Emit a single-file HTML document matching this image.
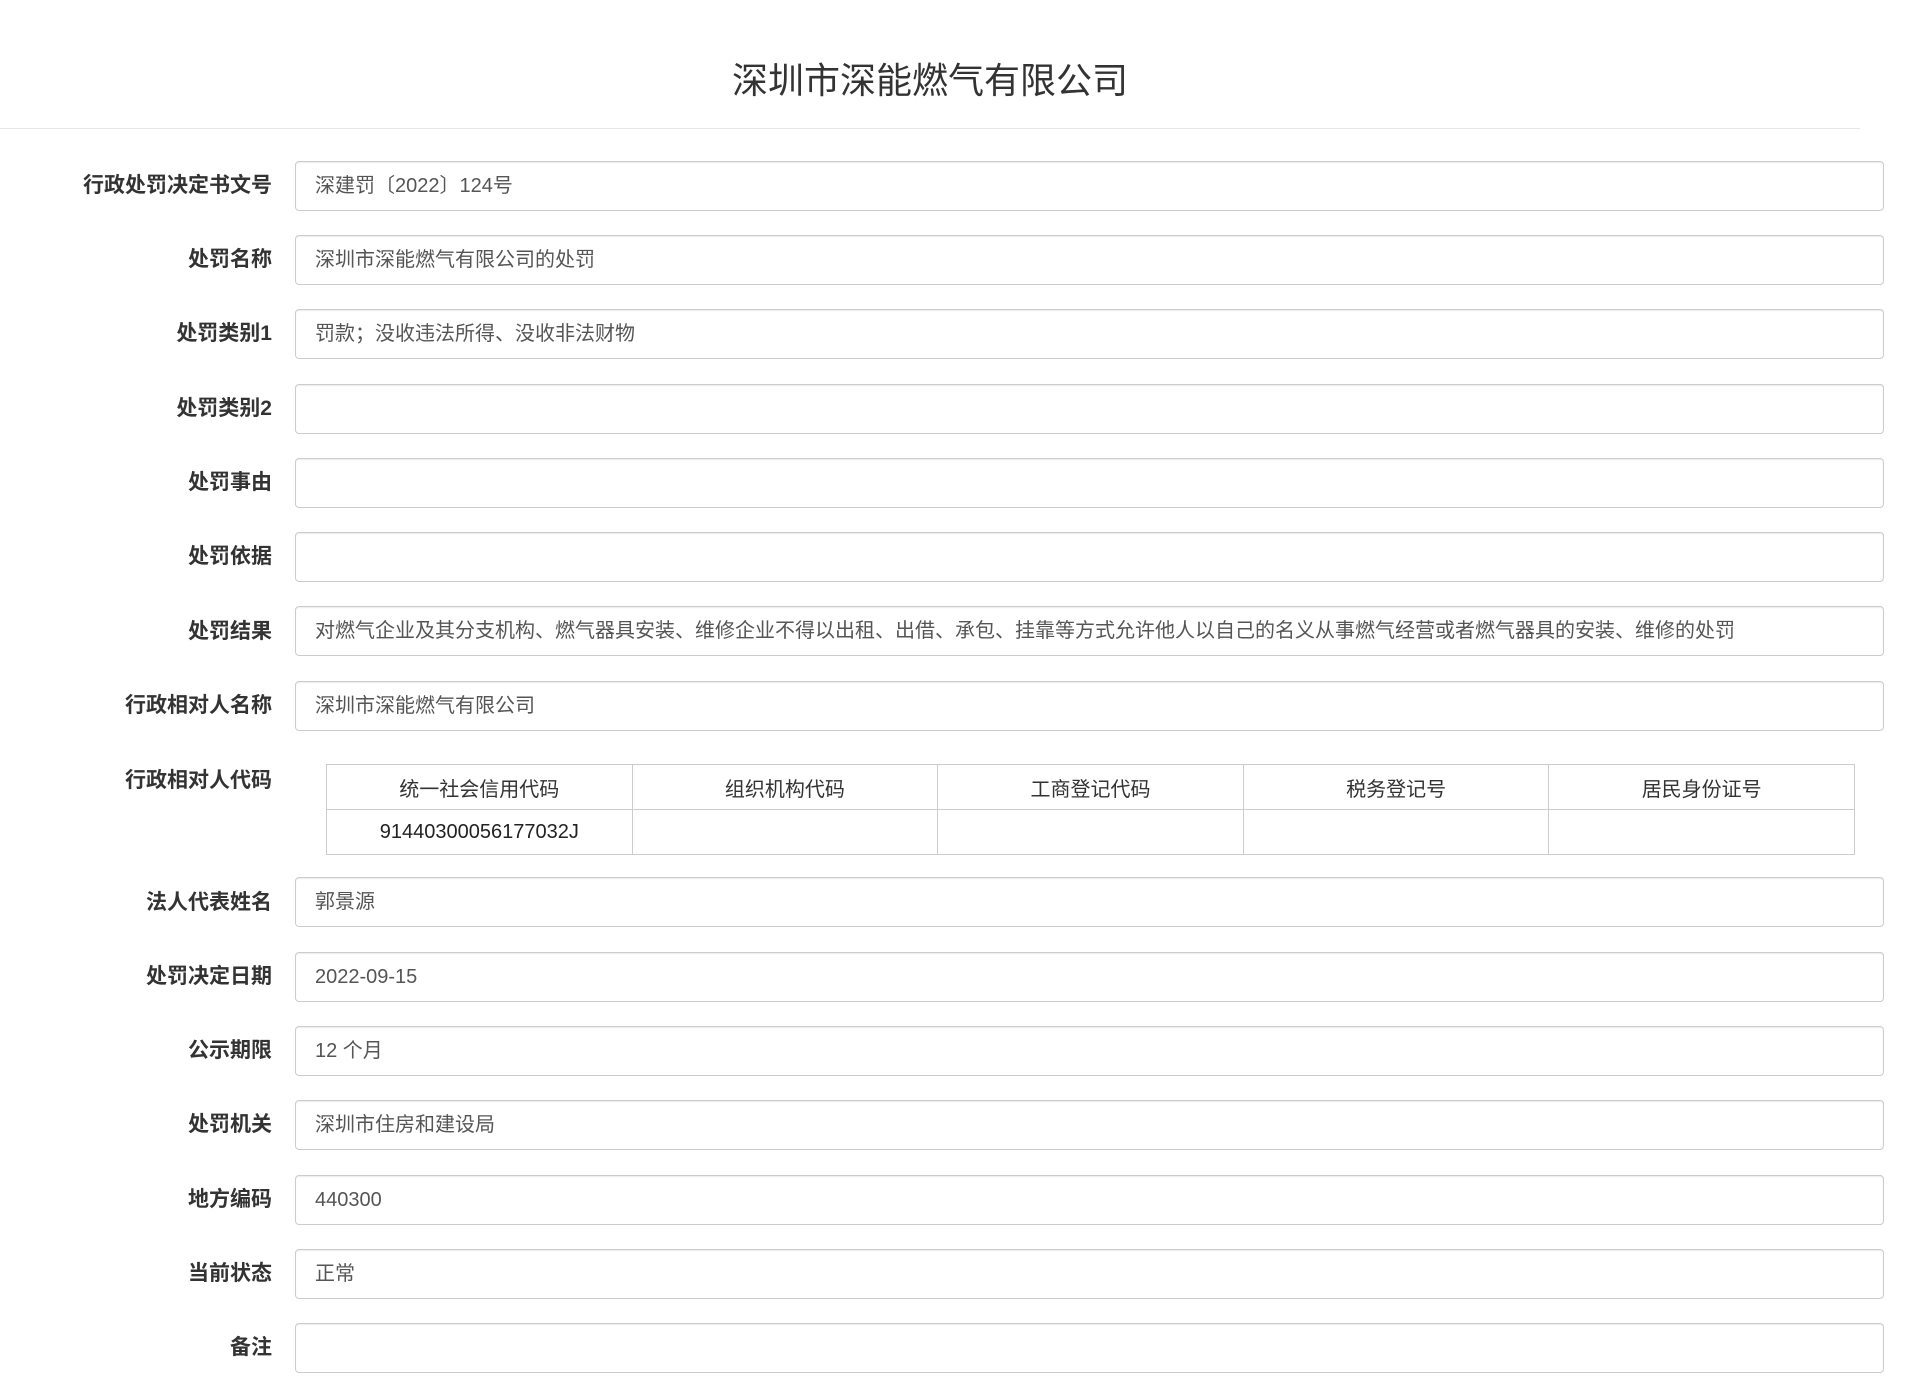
<!DOCTYPE html>
<html><head><meta charset="utf-8"><style>
body{margin:0;width:1920px;height:1383px;background:#fff;font-family:"Liberation Sans","Noto Sans CJK SC",sans-serif;position:relative;overflow:hidden}
.t{position:absolute;left:0;width:1860px;top:52px;text-align:center;font-size:36px;color:#333}
.hr{position:absolute;left:0;top:128px;width:1860px;height:1px;background:#e5e5e5}
.l{position:absolute;right:1648px;font-size:21px;font-weight:bold;color:#333;white-space:nowrap;line-height:30px}
.b{position:absolute;left:295px;width:1589px;height:50px;box-sizing:border-box;border:1px solid #ccc;border-radius:4px;box-shadow:inset 0 1px 1px rgba(0,0,0,.075);font-size:20px;color:#555;line-height:48px;padding-left:19px;white-space:nowrap;overflow:hidden}
table{position:absolute;left:326px;top:764px;width:1529px;border-collapse:collapse;font-size:20px;color:#333}
td{border:1px solid #ccc;text-align:center;height:44px;padding:0;width:20%}
</style></head><body>
<div class="t">深圳市深能燃气有限公司</div>
<div class="hr"></div>

<div class="l" style="top:171px">行政处罚决定书文号</div><div class="b" style="top:161px">深建罚〔2022〕124号</div>
<div class="l" style="top:245px">处罚名称</div><div class="b" style="top:235px">深圳市深能燃气有限公司的处罚</div>
<div class="l" style="top:319px">处罚类别1</div><div class="b" style="top:309px">罚款；没收违法所得、没收非法财物</div>
<div class="l" style="top:394px">处罚类别2</div><div class="b" style="top:384px"></div>
<div class="l" style="top:468px">处罚事由</div><div class="b" style="top:458px"></div>
<div class="l" style="top:542px">处罚依据</div><div class="b" style="top:532px"></div>
<div class="l" style="top:617px">处罚结果</div><div class="b" style="top:606px">对燃气企业及其分支机构、燃气器具安装、维修企业不得以出租、出借、承包、挂靠等方式允许他人以自己的名义从事燃气经营或者燃气器具的安装、维修的处罚</div>
<div class="l" style="top:691px">行政相对人名称</div><div class="b" style="top:681px">深圳市深能燃气有限公司</div>
<div class="l" style="top:766px">行政相对人代码</div>
<table><tr><td>统一社会信用代码</td><td>组织机构代码</td><td>工商登记代码</td><td>税务登记号</td><td>居民身份证号</td></tr>
<tr><td style="color:#222">91440300056177032J</td><td></td><td></td><td></td><td></td></tr></table>
<div class="l" style="top:888px">法人代表姓名</div><div class="b" style="top:877px">郭景源</div>
<div class="l" style="top:962px">处罚决定日期</div><div class="b" style="top:952px">2022-09-15</div>
<div class="l" style="top:1036px">公示期限</div><div class="b" style="top:1026px">12 个月</div>
<div class="l" style="top:1110px">处罚机关</div><div class="b" style="top:1100px">深圳市住房和建设局</div>
<div class="l" style="top:1185px">地方编码</div><div class="b" style="top:1175px">440300</div>
<div class="l" style="top:1259px">当前状态</div><div class="b" style="top:1249px">正常</div>
<div class="l" style="top:1333px">备注</div><div class="b" style="top:1323px"></div>
</body></html>
